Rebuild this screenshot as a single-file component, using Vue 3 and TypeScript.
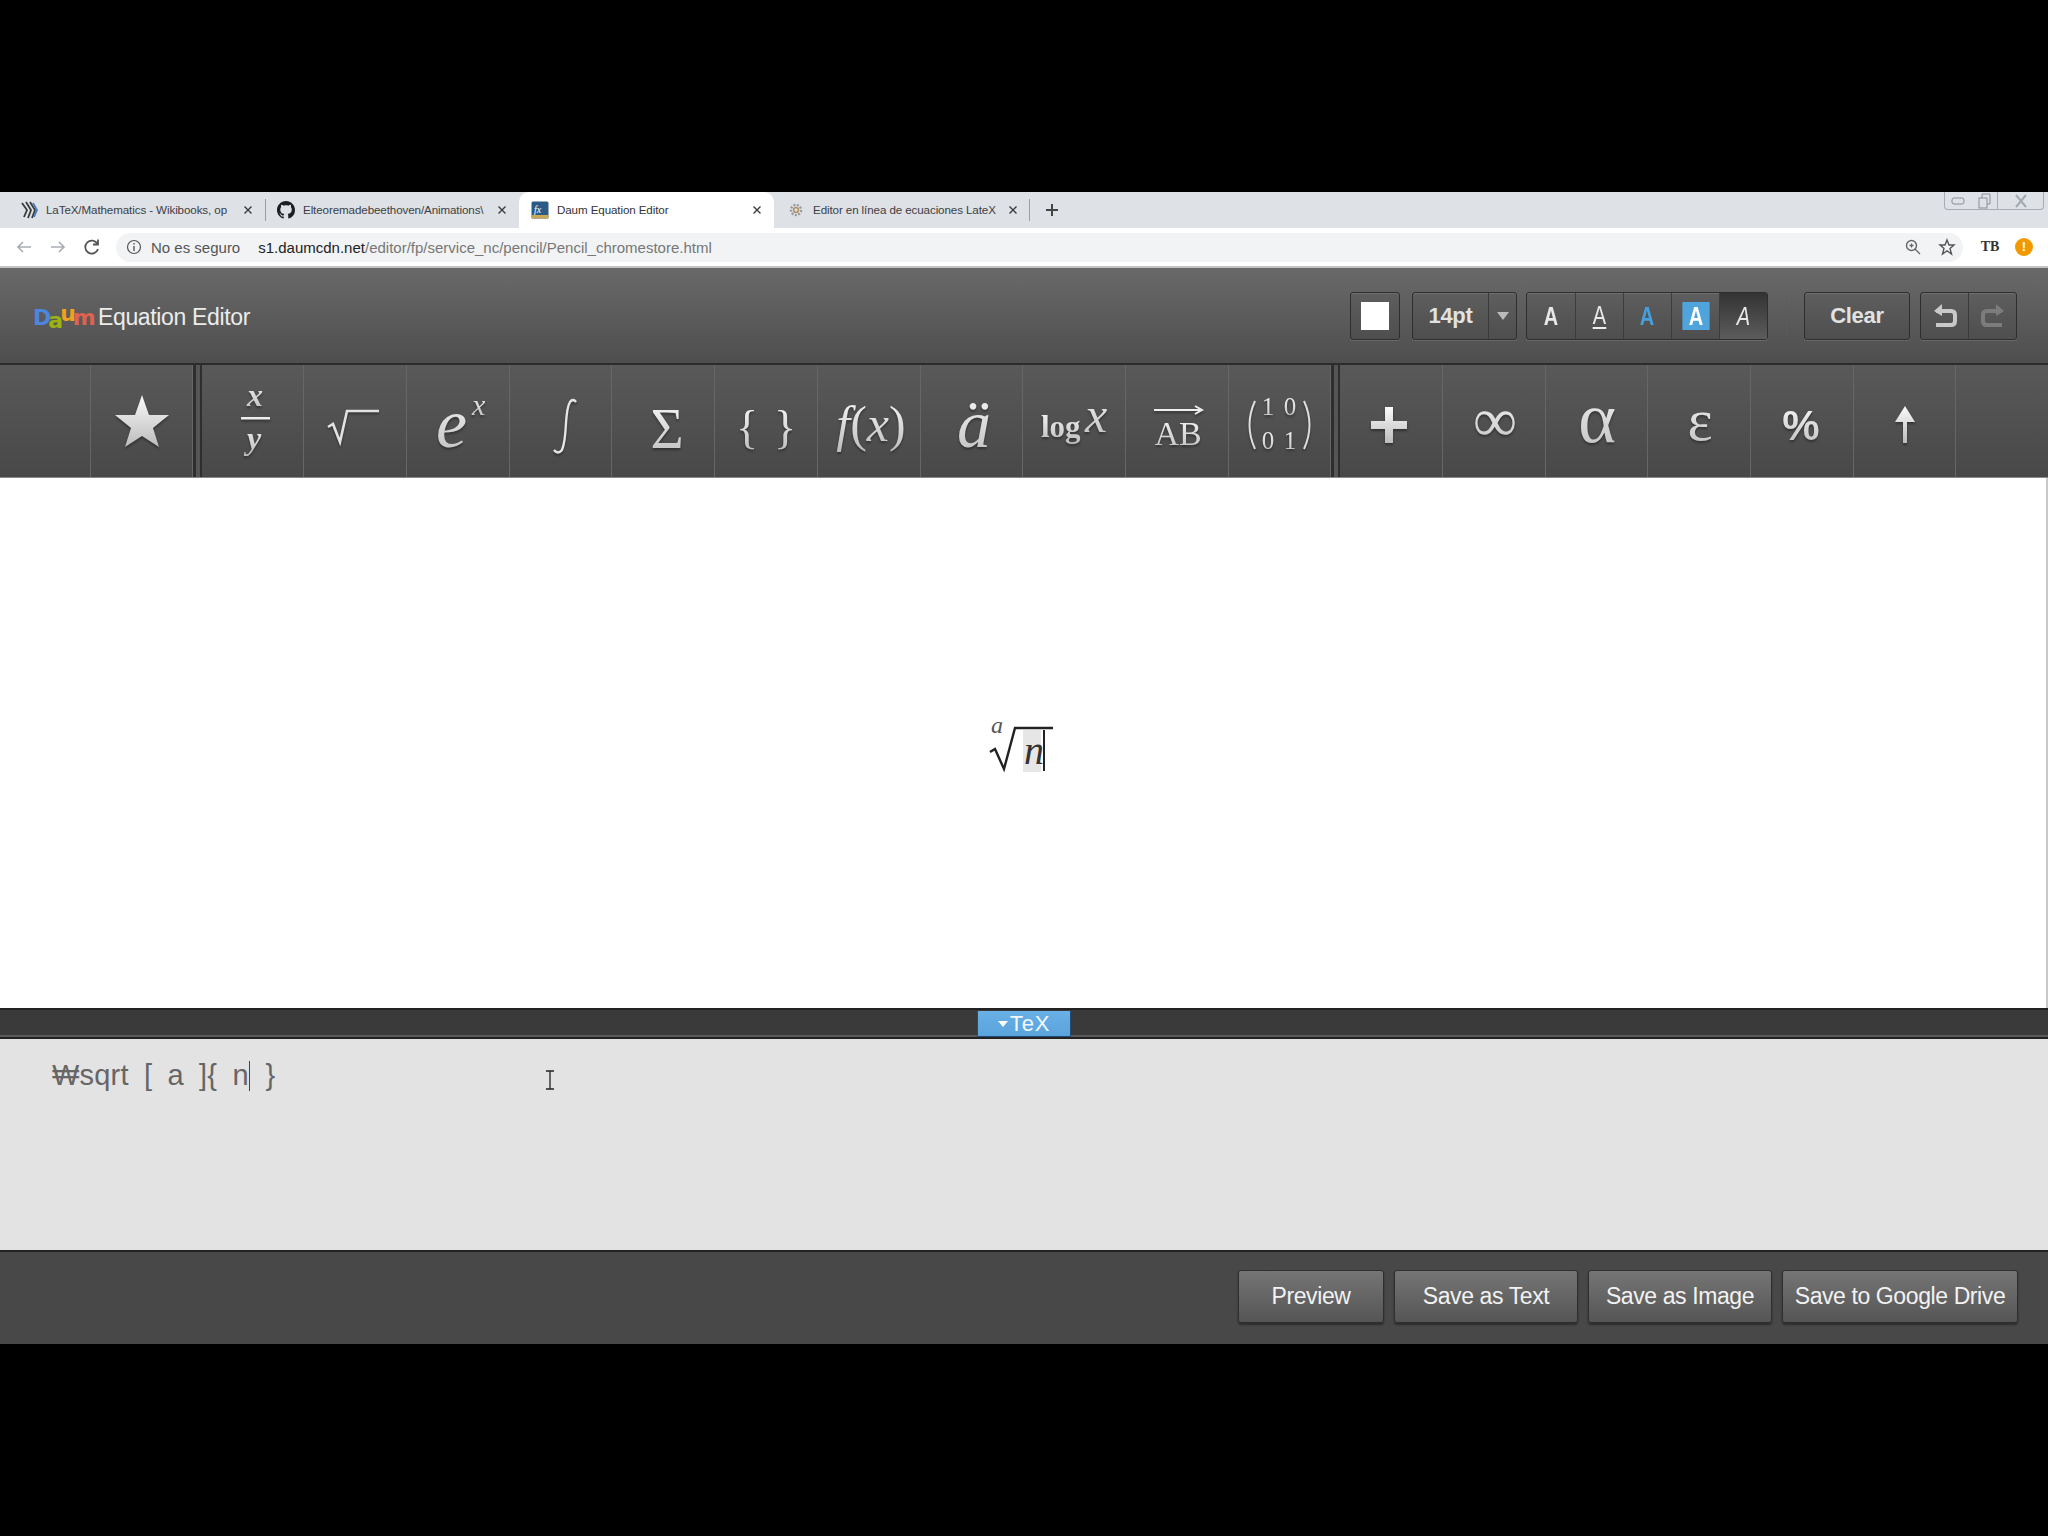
<script setup lang="ts">
const tabs = [
  { title: 'LaTeX/Mathematics - Wikibooks, op', icon: 'wiki', active: false, w: 266 },
  { title: 'Elteoremadebeethoven/Animations\\', icon: 'gh', active: false, w: 253 },
  { title: 'Daum Equation Editor', icon: 'daum', active: true, w: 255 },
  { title: 'Editor en línea de ecuaciones LateX', icon: 'gear', active: false, w: 256 },
]
const saves = [
  { label: 'Preview', w: 146 },
  { label: 'Save as Text', w: 184 },
  { label: 'Save as Image', w: 184 },
  { label: 'Save to Google Drive', w: 236 },
]
</script>

<template>
  <div class="page">
    <div class="tabstrip">
      <div
        v-for="t in tabs"
        :key="t.title"
        class="tab"
        :class="{ active: t.active }"
        :style="{ width: t.w + 'px' }"
      >
        <svg v-if="t.icon === 'wiki'" class="fav" viewBox="0 0 18 18">
          <path d="M2 2 L7 9 L4 16 M6 1 L11 9 L8 17 M10 1 L15 9 L12 17" fill="none" stroke="#3a3a3a" stroke-width="1.8" />
          <path d="M13 2 L17 9 L14 16" fill="none" stroke="#4a7fc0" stroke-width="1.8" />
        </svg>
        <svg v-else-if="t.icon === 'gh'" class="fav" viewBox="0 0 16 16">
          <path fill="#1b1f23" d="M8 0C3.58 0 0 3.58 0 8c0 3.54 2.29 6.53 5.47 7.59.4.07.55-.17.55-.38 0-.19-.01-.82-.01-1.49-2.01.37-2.53-.49-2.69-.94-.09-.23-.48-.94-.82-1.13-.28-.15-.68-.52-.01-.53.63-.01 1.08.58 1.23.82.72 1.21 1.87.87 2.33.66.07-.52.28-.87.51-1.07-1.78-.2-3.64-.89-3.64-3.95 0-.87.31-1.59.82-2.15-.08-.2-.36-1.02.08-2.12 0 0 .67-.21 2.2.82.64-.18 1.32-.27 2-.27.68 0 1.36.09 2 .27 1.53-1.04 2.2-.82 2.2-.82.44 1.1.16 1.92.08 2.12.51.56.82 1.27.82 2.15 0 3.07-1.87 3.75-3.65 3.95.29.25.54.73.54 1.48 0 1.07-.01 1.93-.01 2.2 0 .21.15.46.55.38A8.013 8.013 0 0016 8c0-4.42-3.58-8-8-8z" />
        </svg>
        <svg v-else-if="t.icon === 'daum'" class="fav" viewBox="0 0 18 18">
          <rect x="0.5" y="0.5" width="17" height="17" rx="1.5" fill="#2c5a86" />
          <rect x="0.5" y="14" width="17" height="3.5" fill="#c9a85a" />
          <text x="3" y="12" class="favtext">fx</text>
        </svg>
        <svg v-else class="fav" viewBox="0 0 18 18">
          <circle cx="9" cy="9" r="5" fill="none" stroke="#9a9a9a" stroke-width="2.4" stroke-dasharray="2 1.4" />
          <circle cx="9" cy="9" r="2.4" fill="none" stroke="#b08a50" stroke-width="1.4" />
        </svg>
        <span class="tabtitle">{{ t.title }}</span>
        <svg class="close" viewBox="0 0 10 10"><path d="M1.5 1.5 L8.5 8.5 M8.5 1.5 L1.5 8.5" stroke="#3c3c3c" stroke-width="1.4" /></svg>
      </div>
      <div class="newtab">
        <svg width="14" height="14" viewBox="0 0 14 14"><path d="M7 1V13M1 7H13" stroke="#444" stroke-width="2" /></svg>
      </div>
      <div class="winctl">
        <span class="wc wc-min"><svg width="14" height="8" viewBox="0 0 14 8"><rect x="1" y="1" width="12" height="6" rx="2" fill="none" stroke="#8a8f96" /></svg></span>
        <span class="wc wc-max"><svg width="14" height="16" viewBox="0 0 14 16"><rect x="2" y="5" width="8" height="10" fill="none" stroke="#8a8f96" /><path d="M5 5V1H13V11H10" fill="none" stroke="#8a8f96" /></svg></span>
        <span class="wc wc-close"><svg width="14" height="14" viewBox="0 0 14 14"><path d="M2 1L12 13M12 1L2 13" stroke="#a4a9b0" stroke-width="2" /></svg></span>
      </div>
    </div>

    <div class="urlbar">
      <svg class="nav" width="20" height="20" viewBox="0 0 20 20"><path d="M17 10H4M9 5L4 10L9 15" fill="none" stroke="#a9adb3" stroke-width="1.6" /></svg>
      <svg class="nav nav2" width="20" height="20" viewBox="0 0 20 20"><path d="M3 10H16M11 5L16 10L11 15" fill="none" stroke="#a9adb3" stroke-width="1.6" /></svg>
      <svg class="nav nav3" width="20" height="20" viewBox="0 0 20 20"><path d="M15.5 7A6.5 6.5 0 1 0 16 12M16 2.5V7.5H11" fill="none" stroke="#555" stroke-width="1.8" /></svg>
      <div class="pill">
        <svg width="16" height="16" viewBox="0 0 16 16"><circle cx="8" cy="8" r="6.5" fill="none" stroke="#555" stroke-width="1.2" /><path d="M8 7V12M8 4V5.6" stroke="#555" stroke-width="1.4" /></svg>
        <span class="insecure">No es seguro</span>
        <span class="url"><b>s1.daumcdn.net</b>/editor/fp/service_nc/pencil/Pencil_chromestore.html</span>
        <svg class="zoomicon" width="18" height="18" viewBox="0 0 18 18"><circle cx="7.5" cy="7.5" r="5" fill="none" stroke="#666" stroke-width="1.4" /><path d="M11 11L16 16M5.5 7.5H9.5M7.5 5.5V9.5" stroke="#666" stroke-width="1.3" /></svg>
        <svg class="staricon" width="18" height="18" viewBox="0 0 18 18"><path d="M9 2L11 7H16L12 10.5L13.5 16L9 12.8L4.500 16L6 10.500L2 7H7Z" fill="none" stroke="#555" stroke-width="1.4" /></svg>
      </div>
      <span class="ext">TB</span>
      <span class="alert">!</span>
    </div>

    <header class="apphead">
      <div class="brand">
        <span class="logo"><span class="l-d">D</span><span class="l-a">a</span><span class="l-u">u</span><span class="l-m">m</span></span>
        <span class="brandname">Equation Editor</span>
      </div>
      <div class="controls">
        <div class="ctl swatchbtn"><span class="swatch"></span></div>
        <div class="ctl sizebtn">
          <span class="sizeval">14pt</span>
          <span class="sizearrow"><i></i></span>
        </div>
        <div class="ctl stylegroup">
          <span class="st"><b class="ch">A</b></span>
          <span class="st"><b class="ch thin under">A</b></span>
          <span class="st"><b class="ch blue">A</b></span>
          <span class="st"><b class="ch boxed">A</b></span>
          <span class="st pressed"><b class="ch thin ital">A</b></span>
        </div>
        <span class="vsep"></span>
        <div class="ctl clearbtn">Clear</div>
        <div class="ctl undogroup">
          <span class="ur">
            <svg width="26" height="26" viewBox="0 0 26 26"><path d="M4 8H19Q23 8 23 12V18Q23 22 19 22H4" fill="none" stroke="#c9c9c9" stroke-width="4" /><path d="M10 1V13L2 8Z" fill="#c9c9c9" /></svg>
          </span>
          <span class="ur">
            <svg width="26" height="26" viewBox="0 0 26 26"><path d="M22 8H7Q3 8 3 12V18Q3 22 7 22H22" fill="none" stroke="#7c7c7c" stroke-width="4" /><path d="M16 1V13L24 8Z" fill="#7c7c7c" /></svg>
          </span>
        </div>
      </div>
    </header>

    <div class="toolrow">
      <svg width="0" height="0" class="defs">
        <defs>
          <linearGradient id="silver" x1="0" y1="0" x2="0" y2="1">
            <stop offset="0" stop-color="#fafafa" />
            <stop offset="1" stop-color="#bcbcbc" />
          </linearGradient>
        </defs>
      </svg>
      <button class="cell first">
        <svg viewBox="0 0 102 113"><path d="M51 30 L58 50 L78 50 L62 63 L68 82 L51 71 L34 82 L40 63 L24 50 L44 50 Z" fill="url(#silver)" /></svg>
      </button>
      <span class="dbl"></span>
      <button class="cell">
        <svg viewBox="0 0 102 113">
          <text x="53" y="41" text-anchor="middle" class="m bi" font-size="32">x</text>
          <rect x="39" y="52" width="29" height="2.500" fill="#eee" />
          <text x="52" y="84" text-anchor="middle" class="m bi" font-size="32">y</text>
        </svg>
      </button>
      <button class="cell">
        <svg viewBox="0 0 102 113"><path d="M24 62 L29 59 L36 77 L43 46 H75" fill="none" stroke="#e2e2e2" stroke-width="2.600" /></svg>
      </button>
      <button class="cell">
        <svg viewBox="0 0 102 113">
          <text x="29" y="82" class="m i" font-size="70">e</text>
          <text x="65" y="50" class="m i" font-size="30">x</text>
        </svg>
      </button>
      <button class="cell">
        <svg viewBox="0 0 102 113"><path d="M66 37 Q63 33 60 37 Q57 42 56 58 Q55 78 52 85 Q48 90 44 85" fill="none" stroke="#e6e6e6" stroke-width="2.400" /></svg>
      </button>
      <button class="cell">
        <svg viewBox="0 0 102 113"><text x="55" y="83" text-anchor="middle" class="m" font-size="57">Σ</text></svg>
      </button>
      <button class="cell">
        <svg viewBox="0 0 102 113">
          <text x="32" y="78" text-anchor="middle" class="m" font-size="46">{</text>
          <text x="70" y="78" text-anchor="middle" class="m" font-size="46">}</text>
        </svg>
      </button>
      <button class="cell">
        <svg viewBox="0 0 102 113">
          <text x="53" y="76" text-anchor="middle" class="m" font-size="50"><tspan class="i">f</tspan>(<tspan class="i">x</tspan>)</text>
        </svg>
      </button>
      <button class="cell">
        <svg viewBox="0 0 102 113"><text x="53" y="82" text-anchor="middle" class="m i" font-size="68">ä</text></svg>
      </button>
      <button class="cell">
        <svg viewBox="0 0 102 113">
          <text x="18" y="72" class="m b" font-size="31">log</text>
          <text x="62" y="67" class="m i" font-size="50">x</text>
        </svg>
      </button>
      <button class="cell">
        <svg viewBox="0 0 102 113">
          <path d="M28 45 H74 M69 41 L76 45 L69 49" fill="none" stroke="#eee" stroke-width="2" />
          <text x="52" y="80" text-anchor="middle" class="m" font-size="34">AB</text>
        </svg>
      </button>
      <button class="cell">
        <svg viewBox="0 0 102 113">
          <path d="M26 36 Q15 60 26 84" fill="none" stroke="#dedede" stroke-width="2" />
          <text x="39" y="50" text-anchor="middle" class="m" font-size="25">1</text>
          <text x="61" y="50" text-anchor="middle" class="m" font-size="25">0</text>
          <text x="39" y="84" text-anchor="middle" class="m" font-size="25">0</text>
          <text x="61" y="84" text-anchor="middle" class="m" font-size="25">1</text>
          <path d="M75 36 Q86 60 75 84" fill="none" stroke="#dedede" stroke-width="2" />
        </svg>
      </button>
      <span class="dbl"></span>
      <button class="cell">
        <svg viewBox="0 0 102 113"><path d="M45 42H53V56H67V64H53V78H45V64H31V56H45Z" fill="url(#silver)" /></svg>
      </button>
      <button class="cell">
        <svg viewBox="0 0 102 113"><text x="52" y="76" text-anchor="middle" class="m" font-size="62">∞</text></svg>
      </button>
      <button class="cell">
        <svg viewBox="0 0 102 113"><text x="51" y="77" text-anchor="middle" class="m" font-size="72">α</text></svg>
      </button>
      <button class="cell">
        <svg viewBox="0 0 102 113"><text x="52" y="75" text-anchor="middle" class="m" font-size="60">ε</text></svg>
      </button>
      <button class="cell">
        <svg viewBox="0 0 102 113"><text x="50" y="75" text-anchor="middle" class="m s" font-size="42">%</text></svg>
      </button>
      <button class="cell">
        <svg viewBox="0 0 102 113"><path d="M51 41 L61 57 H53 V78 H49 V57 H41 Z" fill="url(#silver)" /></svg>
      </button>
    </div>

    <main class="canvas">
      <svg class="equation" width="80" height="64" viewBox="0 0 80 64">
        <rect x="40" y="19" width="18" height="42" fill="#e6e6e6" />
        <text x="8" y="22" class="eq" font-size="24" fill="#555">a</text>
        <path d="M7 41 L12 38 L21 58 L32 17 H70" fill="none" stroke="#222" stroke-width="2.400" />
        <text x="41" y="53" class="eq" font-size="40" fill="#333">n</text>
        <rect x="60" y="19" width="2" height="41" fill="#222" />
      </svg>
    </main>

    <div class="texbar">
      <div class="textab"><i></i>TeX</div>
    </div>

    <div class="source">
      <span class="srctext">₩sqrt [ a ]{ n<span class="srccaret"></span> }</span>
      <svg class="ibeam" width="12" height="20" viewBox="0 0 12 20"><path d="M2 1H10M6 1V19M2 19H10" fill="none" stroke="#222" stroke-width="1.300" /></svg>
    </div>

    <footer class="savebar">
      <button v-for="s in saves" :key="s.label" class="savebtn" :style="{ width: s.w + 'px' }">{{ s.label }}</button>
    </footer>
  </div>
</template>

<style>
html, body { margin: 0; background: #000; }
</style>

<style scoped>
.page {
  width: 2048px;
  height: 1536px;
  padding-top: 192px;
  box-sizing: border-box;
  background: #000;
  display: flex;
  flex-direction: column;
  font-family: "Liberation Sans", Arial, sans-serif;
  overflow: hidden;
}
.tabstrip {
  height: 36px;
  background: #dee1e6;
  display: flex;
  align-items: stretch;
  flex: none;
}
.tab {
  display: flex;
  align-items: center;
  box-sizing: border-box;
  padding: 0 14px 0 20px;
  gap: 8px;
  flex: none;
  color: #3c4043;
  font-size: 11.6px;
  letter-spacing: -0.1px;
  line-height: 13px;
  padding-bottom: 1px;
}
.tab:nth-child(1), .tab:nth-child(4) {
  background: linear-gradient(#9aa0a6, #9aa0a6) right center / 1px 22px no-repeat;
}
.tab:nth-child(1) { padding-right: 13px; }
.tab:nth-child(2) { padding-left: 11px; padding-right: 12px; }
.tab:nth-child(3) { padding-left: 12px; padding-right: 12px; }
.tab:nth-child(4) { padding-left: 13px; padding-right: 12px; }
.tab.active { background: #fff; border-radius: 10px 10px 0 0; color: #333; }
.fav { width: 18px; height: 18px; flex: none; }
.favtext { font: italic 10px "Liberation Serif", serif; fill: #fff; }
.tabtitle { flex: 1; min-width: 0; white-space: nowrap; }
.close { width: 10px; height: 10px; flex: none; }
.newtab { width: 44px; display: flex; align-items: center; justify-content: center; }
.winctl {
  margin-left: auto;
  margin-right: 4px;
  width: 100px;
  height: 18px;
  box-sizing: border-box;
  border: 1px solid #a8adb4;
  border-top: none;
  border-radius: 0 0 4px 4px;
  display: flex;
}
.wc { display: flex; align-items: center; justify-content: center; }
.wc-min { width: 26px; }
.wc-max { width: 26px; border-right: 1px solid #a8adb4; }
.wc-close { flex: 1; }

.urlbar {
  height: 40px;
  box-sizing: border-box;
  background: #fff;
  border-bottom: 2px solid #c4c4c4;
  display: flex;
  align-items: center;
  padding-left: 14px;
  flex: none;
}
.nav { flex: none; }
.nav2 { margin-left: 14px; }
.nav3 { margin-left: 14px; }
.pill {
  margin-left: 14px;
  width: 1847px;
  height: 29px;
  box-sizing: border-box;
  background: #f1f3f4;
  border-radius: 15px;
  display: flex;
  align-items: center;
  padding-left: 10px;
  flex: none;
  font-size: 15px;
  color: #5f6368;
}
.insecure { margin-left: 9px; color: #555; }
.url { margin-left: 18px; color: #777; white-space: nowrap; }
.url b { font-weight: normal; color: #222; }
.zoomicon { margin-left: auto; }
.staricon { margin-left: 16px; margin-right: 7px; }
.ext {
  margin-left: 17px;
  font: bold 14px "Liberation Serif", serif;
  color: #333;
  width: 20px;
  text-align: center;
}
.alert {
  margin-left: 15px;
  width: 18px;
  height: 18px;
  border-radius: 50%;
  background: #f29900;
  color: #fff;
  font-size: 13px;
  font-weight: bold;
  text-align: center;
  line-height: 18px;
}

.apphead {
  height: 97px;
  box-sizing: border-box;
  border-bottom: 2px solid #2c2c2c;
  background: linear-gradient(#696969, #4e4e4e);
  display: flex;
  align-items: center;
  padding: 0 31px 0 33px;
  flex: none;
}
.brand { display: flex; align-items: center; gap: 7px; transform: translateY(2px); }
.logo {
  font-family: "DejaVu Sans", sans-serif;
  font-size: 22px;
  font-weight: bold;
  letter-spacing: -3px;
  display: inline-flex;
  width: 58px;
  white-space: nowrap;
}
.l-d { color: #4d86e0; }
.l-a { color: #9db312; transform: translateY(3px); }
.l-u { color: #f0a11f; transform: translateY(-4px); }
.l-m { color: #e0624e; }
.brandname { color: #ececec; font-size: 23px; white-space: nowrap; letter-spacing: -0.35px; }
.controls { margin-left: auto; display: flex; align-items: center; height: 48px; }
.ctl {
  height: 48px;
  box-sizing: border-box;
  border: 1px solid #2e2e2e;
  border-radius: 3px;
  background: linear-gradient(#5e5e5e, #4e4e4e);
  box-shadow: inset 0 1px 0 rgba(255,255,255,.1), 0 1px 0 rgba(255,255,255,.12);
  display: flex;
  align-items: center;
  flex: none;
  color: #e2e2e2;
  font-weight: bold;
}
.swatchbtn { width: 50px; justify-content: center; }
.swatch { width: 28px; height: 28px; background: #fff; display: block; }
.sizebtn { width: 105px; margin-left: 12px; font-size: 22px; }
.sizeval { width: 75px; text-align: center; letter-spacing: -0.3px; }
.sizearrow {
  flex: 1;
  align-self: stretch;
  border-left: 1px solid #3a3a3a;
  display: flex;
  align-items: center;
  justify-content: center;
}
.sizearrow i {
  width: 0;
  height: 0;
  border: 6px solid transparent;
  border-top: 8px solid #bbb;
  border-bottom: none;
}
.stylegroup { width: 242px; margin-left: 9px; padding-left: 1px; }
.st {
  width: 48px;
  align-self: stretch;
  display: flex;
  align-items: center;
  justify-content: center;
  border-right: 1px solid #3c3c3c;
  box-sizing: border-box;
}
.st:last-child { border-right: none; flex: 1; }
.st.pressed { background: linear-gradient(#333, #5c5c5c); }
.ch { font-size: 25px; display: inline-block; transform: scaleX(.8); line-height: 28px; color: #e8e8e8; }
.thin { font-weight: normal; }
.under { border-bottom: 2px solid #eee; line-height: 24px; }
.blue { color: #45a0de; }
.boxed { background: #50a4dc; width: 34px; height: 28px; text-align: center; color: #fff; }
.ital { font-style: italic; }
.vsep { width: 1px; height: 36px; margin: 0 17px 0 18px; background: #5c5c5c; flex: none; }
.clearbtn { width: 106px; justify-content: center; font-size: 22px; letter-spacing: -0.3px; }
.undogroup { width: 97px; margin-left: 10px; }
.ur { flex: 1; align-self: stretch; display: flex; align-items: center; justify-content: center; }
.ur:first-child { border-right: 1px solid #3a3a3a; }

.toolrow {
  height: 113px;
  background: linear-gradient(#595959, #484848);
  border-bottom: 1px solid #8a8a8a;
  box-sizing: border-box;
  display: flex;
  padding-left: 90px;
  flex: none;
}
.defs { position: absolute; }
.cell {
  width: 102.7px;
  height: 112px;
  flex: none;
  padding: 0;
  background: none;
  border: none;
  border-right: 1px solid #666;
  box-sizing: border-box;
}
.cell.first { border-left: 1px solid #666; }
.cell svg { display: block; width: 102px; height: 113px; overflow: visible; filter: drop-shadow(0 2px 1px rgba(0,0,0,.35)); }
.dbl {
  width: 9px;
  flex: none;
  box-sizing: border-box;
  border-left: 3px solid #2e2e2e;
  border-right: 2px solid #2e2e2e;
  background: #555;
}
.m { font-family: "Liberation Serif", "DejaVu Serif", serif; fill: url(#silver); }
.i { font-style: italic; }
.b { font-weight: bold; }
.bi { font-style: italic; font-weight: bold; }
.s { font-family: "Liberation Sans", sans-serif; font-weight: bold; }

.canvas {
  height: 530px;
  background: #fff;
  display: flex;
  align-items: center;
  justify-content: center;
  flex: none;
  border-right: 2px solid #c8c8c8;
  box-sizing: border-box;
}
.eq { font-family: "Liberation Serif", serif; font-style: italic; }

.texbar {
  height: 31px;
  box-sizing: border-box;
  background: #3a3a3a;
  border-top: 2px solid #222;
  border-bottom: 2px solid #222;
  box-shadow: inset 0 -2px 0 #5a5a5a;
  display: flex;
  justify-content: center;
  flex: none;
}
.textab {
  width: 94px;
  box-sizing: border-box;
  border: 1px solid #234a78;
  border-top: none;
  margin-top: 1px;
  background: linear-gradient(#68b0e6, #5aa4dc);
  color: #f2f8fc;
  font-size: 22px;
  font-weight: normal;
  line-height: 25px;
  letter-spacing: 0.8px;
  display: flex;
  align-items: center;
  justify-content: center;
  gap: 2px;
}
.textab i {
  width: 0;
  height: 0;
  border: 5px solid transparent;
  border-top: 6px solid #fff;
  border-bottom: none;
}
.source {
  height: 213px;
  box-sizing: border-box;
  background: #e3e3e3;
  display: flex;
  align-items: flex-start;
  padding: 19px 0 0 52px;
  flex: none;
  border-bottom: 2px solid #222;
}
.srctext {
  font-size: 29px;
  color: #666;
  line-height: 34px;
  white-space: pre;
  width: 492px;
  letter-spacing: 0.2px;
  word-spacing: 7px;
}
.srccaret {
  display: inline-block;
  width: 1.5px;
  height: 30px;
  background: #444;
  vertical-align: -6px;
}
.ibeam { margin-top: 12px; }

.savebar {
  height: 92px;
  box-sizing: border-box;
  background: #484848;
  display: flex;
  justify-content: flex-end;
  align-items: flex-start;
  gap: 10px;
  padding: 18px 30px 0 0;
  flex: none;
}
.savebtn {
  height: 53px;
  box-sizing: border-box;
  border: 1px solid #2f2f2f;
  border-radius: 3px;
  background: linear-gradient(#757575, #555);
  box-shadow: 0 2px 2px rgba(0,0,0,.4);
  color: #f2f2f2;
  font-family: "Liberation Sans", Arial, sans-serif;
  font-size: 23px;
  font-weight: normal;
  letter-spacing: -0.4px;
  padding: 0;
  white-space: nowrap;
}
</style>
